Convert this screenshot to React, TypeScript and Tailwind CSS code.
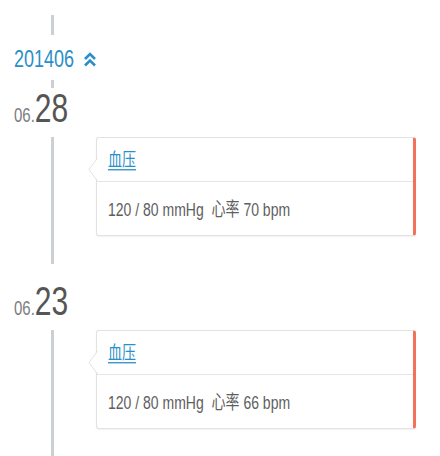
import React from "react";

const entries = [
  { day: "28", month: "06", title: "血压", text: "120 / 80 mmHg  心率 70 bpm" },
  { day: "23", month: "06", title: "血压", text: "120 / 80 mmHg  心率 66 bpm" },
];

function Line({ className = "" }: { className?: string }) {
  return <div className={`ml-[51px] w-[3px] bg-[#cbd0d5] ${className}`} />;
}

function ChevronsUp() {
  return (
    <svg width="14" height="15" viewBox="0 0 14 15" fill="none" stroke="#2b8fc7" strokeWidth="2.6" strokeLinejoin="miter">
      <polyline points="2,7 7,2 12,7" />
      <polyline points="2,13.5 7,8.5 12,13.5" />
    </svg>
  );
}

function Card({ title, text }: { title: string; text: string }) {
  return (
    <div className="relative flex-1 rounded-[3px] border border-[#e2e2e2] border-r-[3px] border-r-[#f3715a] bg-white shadow-[0_1px_2px_rgba(0,0,0,0.06)]">
      {/* arrow toward the timeline */}
      <svg className="absolute left-[-9px] top-[20px]" width="10" height="23" viewBox="0 0 10 23">
        <polygon points="10,0 1,11.5 10,23" fill="#fff" />
        <polyline points="9.5,0 1,11.5 9.5,23" fill="none" stroke="#e2e2e2" strokeWidth="1" />
      </svg>
      <div className="flex h-[44px] items-center border-b border-[#e6e6e6] pl-[11px]">
        <span className="inline-block scale-y-[1.3] text-[14px] leading-none text-[#2b8fc7] underline underline-offset-2">
          {title}
        </span>
      </div>
      <div className="flex h-[53px] items-center pl-[11px]">
        <span className="inline-block scale-y-[1.35] whitespace-pre text-[14px] leading-none text-[#5e5e5e]">
          {text}
        </span>
      </div>
    </div>
  );
}

export default function App() {
  return (
    <div
      className="h-[456px] w-[440px] overflow-hidden bg-white"
      style={{ fontFamily: '"Liberation Sans", Arial, "Noto Sans CJK SC", sans-serif' }}
    >
      <div className="pt-[15px]">
        <Line className="h-[20px]" />
      </div>

      <div className="flex h-[45px] items-center gap-[9px] pl-[14px] pt-[3px]">
        <span className="inline-block scale-y-[1.37] text-[18px] leading-none text-[#2b8fc7]">201406</span>
        <ChevronsUp />
      </div>

      <Line className="h-[8px]" />

      {entries.map((e, i) => (
        <div key={i} className={i > 0 ? "pt-[17px]" : ""}>
          <div className="h-[49px] pl-[14px]">
            <span className="inline-block origin-top scale-y-[1.35] leading-none">
              <span className="text-[15px] text-[#7d7d7d]">{e.month}.</span>
              <span className="text-[30px] text-[#555]">{e.day}</span>
            </span>
          </div>
          <div className="flex pr-[24px]">
            <Line className="self-stretch" />
            <div className="ml-[42px] flex flex-1 pb-[28px]">
              <Card title={e.title} text={e.text} />
            </div>
          </div>
        </div>
      ))}

      <Line className="h-[60px]" />
    </div>
  );
}
